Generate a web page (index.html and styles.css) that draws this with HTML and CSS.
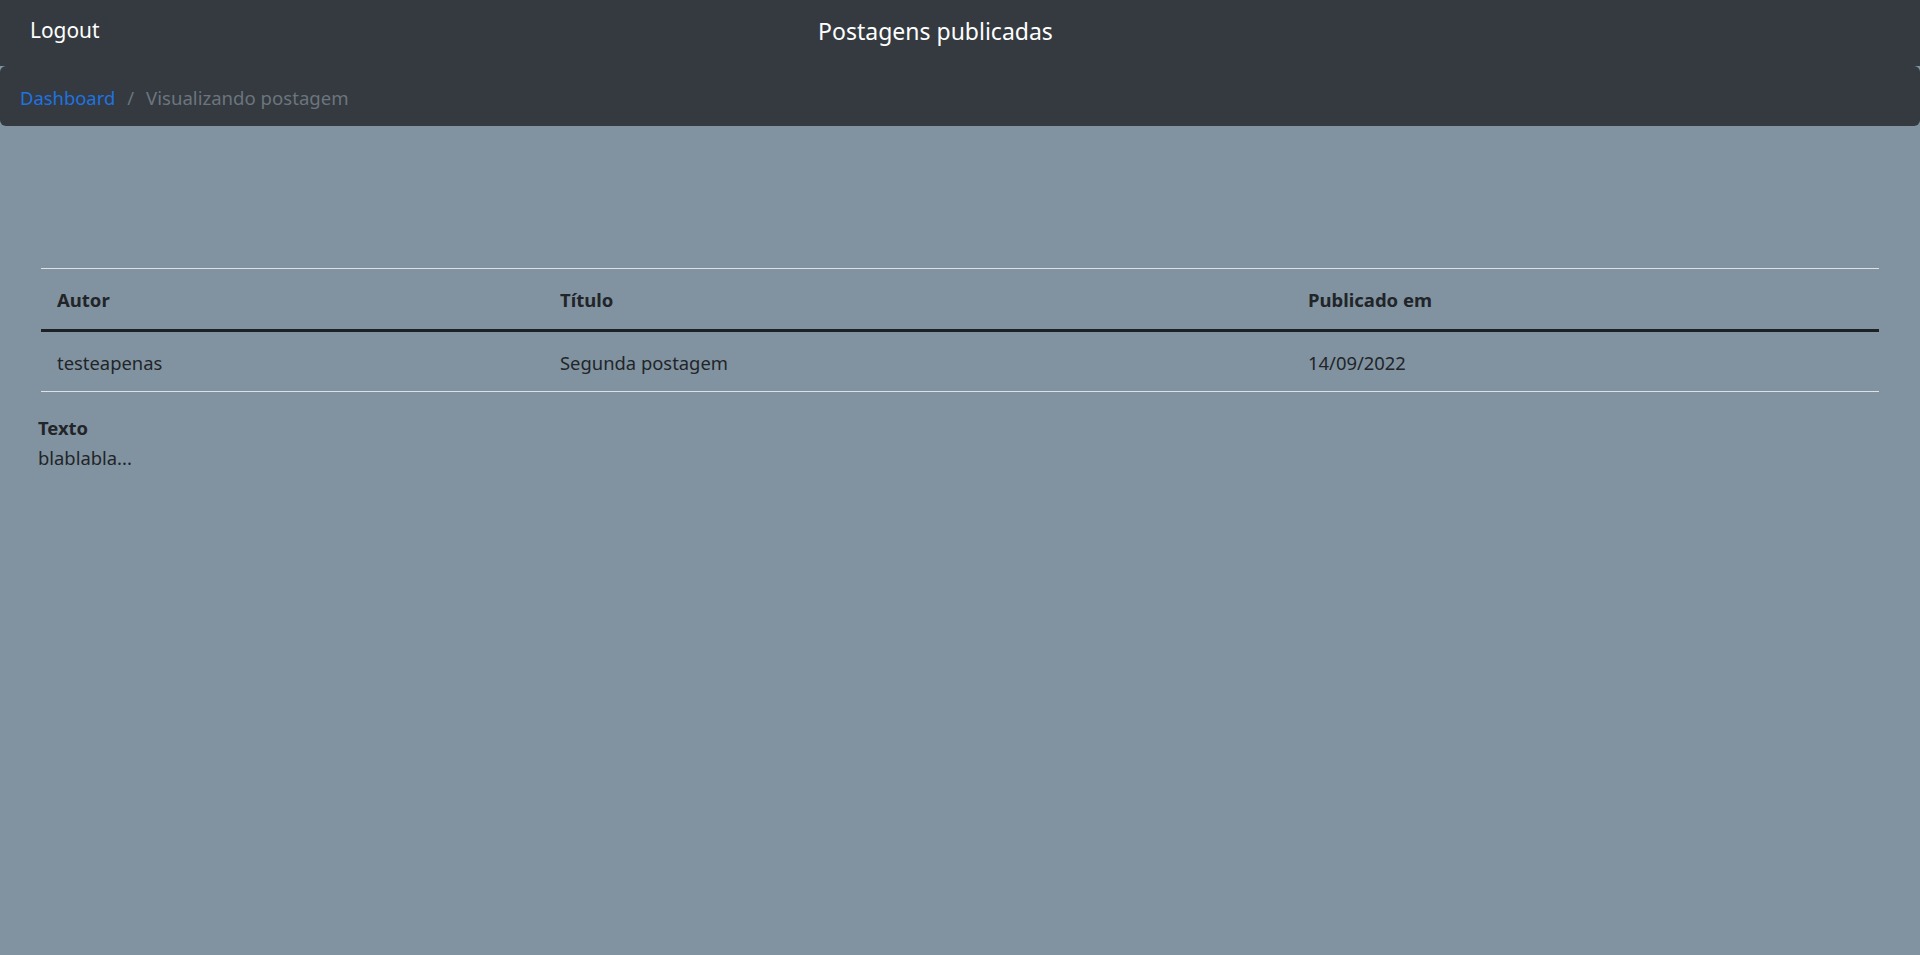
FILE: index.html
```html
<!DOCTYPE html>
<html lang="pt-BR">
<head>
<meta charset="utf-8">
<title>Visualizando postagem</title>
<link rel="stylesheet" href="styles.css">
</head>
<body>
<header class="topbar">
  <a class="logout" href="#">Logout</a>
  <h1 class="title">Postagens publicadas</h1>
  <span class="spacer"></span>
</header>
<nav class="crumbs">
  <a class="crumb-link" href="#">Dashboard</a><span class="sep">/</span><span class="crumb-active">Visualizando postagem</span>
</nav>
<main class="content">
  <table class="posts">
    <colgroup><col class="c1"><col class="c2"><col class="c3"></colgroup>
    <thead>
      <tr><th>Autor</th><th>Título</th><th>Publicado em</th></tr>
    </thead>
    <tbody>
      <tr><td>testeapenas</td><td>Segunda postagem</td><td>14/09/2022</td></tr>
    </tbody>
  </table>
  <div class="post-body">
    <strong class="label">Texto</strong>
    <p class="text">blablabla...</p>
  </div>
</main>
</body>
</html>
```
FILE: styles.css
```css
* { box-sizing: border-box; }
html, body { height: 100%; }
body {
  margin: 0;
  background: #8193a0;
  color: #212529;
  font-family: "Noto Sans", "Open Sans", sans-serif;
  font-size: 18.4px;
  line-height: 30px;
}
.topbar {
  display: grid;
  grid-template-columns: 1fr auto 1fr;
  align-items: start;
  height: 66px;
  padding: 15px 30px 0 30px;
  background: #343a40;
}
.logout {
  justify-self: start;
  margin-top: 1px;
  color: #fff;
  text-decoration: none;
  font-size: 20.9px;
  line-height: 28px;
}
.title {
  margin: 0 49px 0 0;
  color: #fff;
  font-weight: 400;
  font-size: 23px;
  line-height: 32px;
}
.crumbs {
  height: 60px;
  padding: 17px 0 13px 20px;
  background: #343a40;
  border-radius: 6px;
  font-size: 18.4px;
  line-height: 30px;
}
.crumb-link { color: #1f73e0; text-decoration: none; }
.sep { color: #6c757d; padding: 0 12px; }
.crumb-active { color: #6c757d; font-size: 18.6px; }
.content {
  padding: 142px 41px 0 38px;
}
.posts {
  margin-left: 3px;
  width: calc(100% - 3px);
  border-collapse: collapse;
  table-layout: fixed;
}
.c1 { width: 503px; }
.c2 { width: 748px; }
.posts thead tr { border-top: 1px solid #dee2e6; border-bottom: 3px solid #1c2126; }
.posts tbody tr { border-bottom: 1px solid #dee2e6; }
.posts th {
  text-align: left;
  font-weight: 700;
  font-size: 18.5px;
  padding: 16px 16px 14px;
}
.posts td {
  padding: 16px 16px 13px;
  font-weight: 400;
}
.post-body { padding-top: 21px; }
.label { display: block; font-weight: 700; }
.text { margin: 0; }
```
